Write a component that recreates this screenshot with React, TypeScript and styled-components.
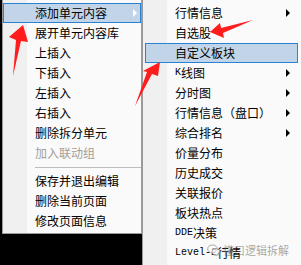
import React from 'react'
import styled, { createGlobalStyle } from 'styled-components'

const GlobalStyle = createGlobalStyle`
  html, body {
    margin: 0;
    padding: 0;
    background: #000000;
  }
  body {
    font-family: "Noto Sans CJK SC", "Noto Sans", sans-serif;
    font-size: 12px;
  }
`

const Screen = styled.div`
  position: relative;
  width: 301px;
  height: 265px;
  overflow: hidden;
  display: flex;
  align-items: flex-start;
  padding-left: 2px;
  box-sizing: border-box;
  background: #000000;
`

const Menu = styled.div<{ $width: number }>`
  width: ${p => p.$width}px;
  flex: none;
  box-sizing: border-box;
  padding: 3px 0 2px 0;
  background: linear-gradient(to right, #f0f0f0 24px, #fafafa 24px);
  border-left: 1px solid #9a9a9a;
  border-right: 1px solid #9a9a9a;
  border-bottom: 1px solid #9a9a9a;
`

const SubMenu = styled(Menu)`
  border-right: none;
  border-bottom: none;
  min-height: 265px;
`

const Item = styled.div<{ $active?: boolean; $disabled?: boolean; $inset?: boolean }>`
  height: 20px;
  display: flex;
  align-items: center;
  padding-left: ${p => (p.$active && p.$inset ? 30 : 32)}px;
  margin: ${p => (p.$active && p.$inset ? '0 3px 0 2px' : '0')};
  color: ${p => (p.$disabled ? '#a39e97' : '#000000')};
  background: ${p => (p.$active ? '#c2d5e8' : 'transparent')};
  box-shadow: ${p => (p.$active ? 'inset 0 0 0 1px #2a82d6' : 'none')};
  white-space: nowrap;
  line-height: 20px;
`

const Mono = styled.span`
  font-family: "Liberation Mono", "DejaVu Sans Mono", monospace;
  font-size: 10px;
`

const Arrow = styled.span<{ $light?: boolean; $right: number }>`
  margin-left: auto;
  margin-right: ${p => p.$right}px;
  width: 0;
  height: 0;
  border-top: 4px solid transparent;
  border-bottom: 4px solid transparent;
  border-left: 4px solid ${p => (p.$light ? '#ffffff' : '#000000')};
`

const Separator = styled.div`
  height: 8px;
  display: flex;
  align-items: center;
  padding-left: 32px;

  &::after {
    content: '';
    flex: 1;
    height: 1px;
    background: #bdbdbd;
  }
`

const Annotations = styled.svg`
  position: absolute;
  left: 0;
  top: 0;
  pointer-events: none;
`

const Watermark = styled.div`
  position: absolute;
  left: 207px;
  top: 242px;
  display: flex;
  align-items: center;
  gap: 2px;
  color: rgba(95, 95, 95, 0.55);
  font-size: 11px;
  pointer-events: none;
`

const mainItems: { label: string; disabled?: boolean; sepBefore?: boolean }[] = [
  { label: '展开单元内容库' },
  { label: '上插入' },
  { label: '下插入' },
  { label: '左插入' },
  { label: '右插入' },
  { label: '删除拆分单元' },
  { label: '加入联动组', disabled: true },
  { label: '保存并退出编辑', sepBefore: true },
  { label: '删除当前页面' },
  { label: '修改页面信息' },
]

const subItems: { label: React.ReactNode; arrow?: boolean; active?: boolean }[] = [
  { label: '行情信息', arrow: true },
  { label: '自选股' },
  { label: '自定义板块', active: true },
  { label: <><Mono>K</Mono>线图</>, arrow: true },
  { label: '分时图', arrow: true },
  { label: '行情信息（盘口）', arrow: true },
  { label: '综合排名', arrow: true },
  { label: '价量分布' },
  { label: '历史成交' },
  { label: '关联报价' },
  { label: '板块热点' },
  { label: <><Mono>DDE</Mono>决策</> },
  { label: <><Mono>Level-2</Mono>行情</> },
]

const App: React.FC = () => {
  return (
    <Screen>
      <GlobalStyle />
      <Menu $width={140}>
        <Item $active>
          添加单元内容
          <Arrow $light $right={4} />
        </Item>
        {mainItems.map(item => (
          <React.Fragment key={item.label}>
            {item.sepBefore && <Separator />}
            <Item $disabled={item.disabled}>{item.label}</Item>
          </React.Fragment>
        ))}
      </Menu>
      <SubMenu $width={159}>
        {subItems.map((item, index) => (
          <Item key={index} $active={item.active} $inset>
            {item.label}
            {item.arrow && <Arrow $right={11} />}
          </Item>
        ))}
      </SubMenu>

      <Annotations width="301" height="265" viewBox="0 0 301 265">
        <polygon points="23,25 28,42 21,41 13,76 16,40 9,37" fill="#ff1c1c" />
        <polygon points="210,32 220,23 221,28 253,20 223,33 224,38" fill="#ff1c1c" />
        <polygon points="160,62 158,76 152,74 135,106 147,72 143,71" fill="#ff1c1c" />
      </Annotations>

      <Watermark>
        <svg width="14" height="13" viewBox="0 0 14 13">
          <ellipse cx="5.5" cy="5" rx="4.8" ry="4" fill="rgba(255,255,255,0.5)" stroke="rgba(110,110,110,0.6)" strokeWidth="1" />
          <ellipse cx="9" cy="8" rx="4" ry="3.4" fill="rgba(255,255,255,0.6)" stroke="rgba(110,110,110,0.6)" strokeWidth="1" />
        </svg>
        懂口逻辑拆解
      </Watermark>
    </Screen>
  )
}

export default App
